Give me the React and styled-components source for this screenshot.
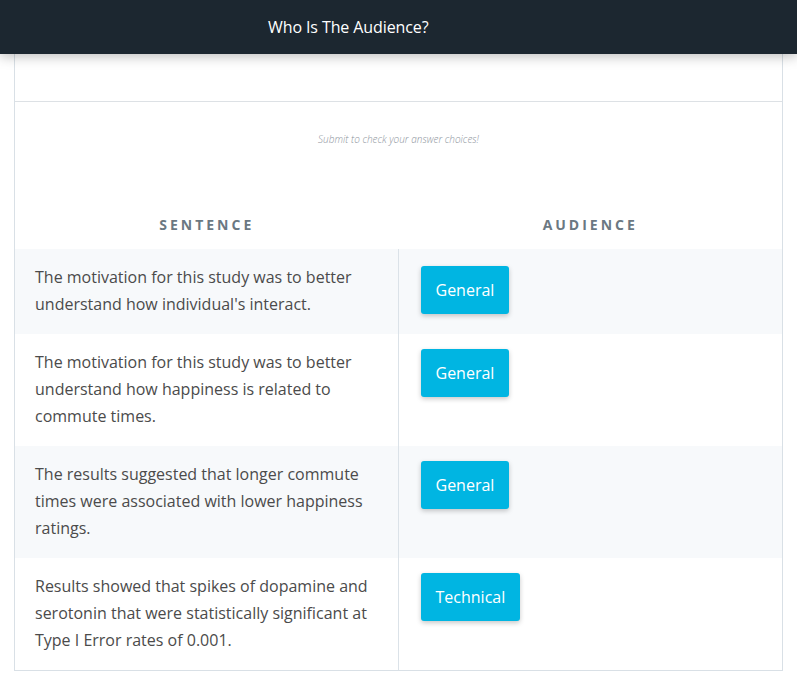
import React from 'react';
import styled, { createGlobalStyle } from 'styled-components';

const GlobalStyle = createGlobalStyle`
    body {
        margin: 0;
        background: #ffffff;
        font-family: "Open Sans", "Noto Sans", sans-serif;
    }
`;

const Header = styled.header`
    position: relative;
    z-index: 2;
    height: 54px;
    display: flex;
    align-items: center;
    padding-left: 268px;
    background-color: #1c2730;
    box-shadow: 0 2px 12px rgba(0, 0, 0, 0.28);
`;

const HeaderTitle = styled.h1`
    margin: 0;
    font-size: 16px;
    font-weight: 400;
    color: #ffffff;
    letter-spacing: -0.1px;
`;

const Card = styled.main`
    margin: 0 14px 8px;
    border: 1px solid #d9e0e6;
    border-top: none;
    background: #ffffff;
`;

const CardTop = styled.div`
    height: 47px;
    border-bottom: 1px solid #dde1e5;
    background: #ffffff;
`;

const Note = styled.p`
    margin: 30px 0 55px;
    text-align: center;
    font-size: 10px;
    line-height: 14px;
    font-style: italic;
    font-weight: 300;
    color: #8c939b;
`;

const Table = styled.div`
    display: grid;
    grid-template-columns: 1fr 1fr;
`;

const HeadCell = styled.div`
    padding: 12px 0;
    line-height: 24px;
    text-align: center;
    font-size: 14px;
    font-weight: 700;
    letter-spacing: 3px;
    color: #6b7882;
`;

const SentenceCell = styled.div`
    padding: 15px 20px 16px;
    font-size: 16px;
    line-height: 27px;
    color: #4b4b4b;
    border-right: 1px solid #dbe2e8;
    background: ${props => (props.$shaded ? '#f7f9fb' : '#ffffff')};
`;

const AudienceCell = styled.div`
    padding: ${props => (props.$first ? '17px' : '15px')} 22px 15px;
    background: ${props => (props.$shaded ? '#f7f9fb' : '#ffffff')};
`;

const AudienceButton = styled.button`
    border: none;
    border-radius: 3px;
    padding: 14px 15px;
    font-family: inherit;
    font-size: 16px;
    line-height: 20px;
    color: #ffffff;
    background-color: #00b5e2;
    box-shadow: 0 2px 5px rgba(0, 0, 0, 0.22);
    cursor: pointer;
`;

const rows = [
    { sentence: "The motivation for this study was to better understand how individual's interact.", audience: 'General' },
    { sentence: 'The motivation for this study was to better understand how happiness is related to commute times.', audience: 'General' },
    { sentence: 'The results suggested that longer commute times were associated with lower happiness ratings.', audience: 'General' },
    { sentence: 'Results showed that spikes of dopamine and serotonin that were statistically significant at Type I Error rates of 0.001.', audience: 'Technical' },
];

const App = () => (
    <>
        <GlobalStyle />
        <Header>
            <HeaderTitle>Who Is The Audience?</HeaderTitle>
        </Header>
        <Card>
            <CardTop />
            <Note>Submit to check your answer choices!</Note>
            <Table>
                <HeadCell>SENTENCE</HeadCell>
                <HeadCell>AUDIENCE</HeadCell>
                {rows.map((row, i) => (
                    <React.Fragment key={i}>
                        <SentenceCell $shaded={i % 2 === 0}>{row.sentence}</SentenceCell>
                        <AudienceCell $shaded={i % 2 === 0} $first={i === 0}>
                            <AudienceButton>{row.audience}</AudienceButton>
                        </AudienceCell>
                    </React.Fragment>
                ))}
            </Table>
        </Card>
    </>
);

export default App;
